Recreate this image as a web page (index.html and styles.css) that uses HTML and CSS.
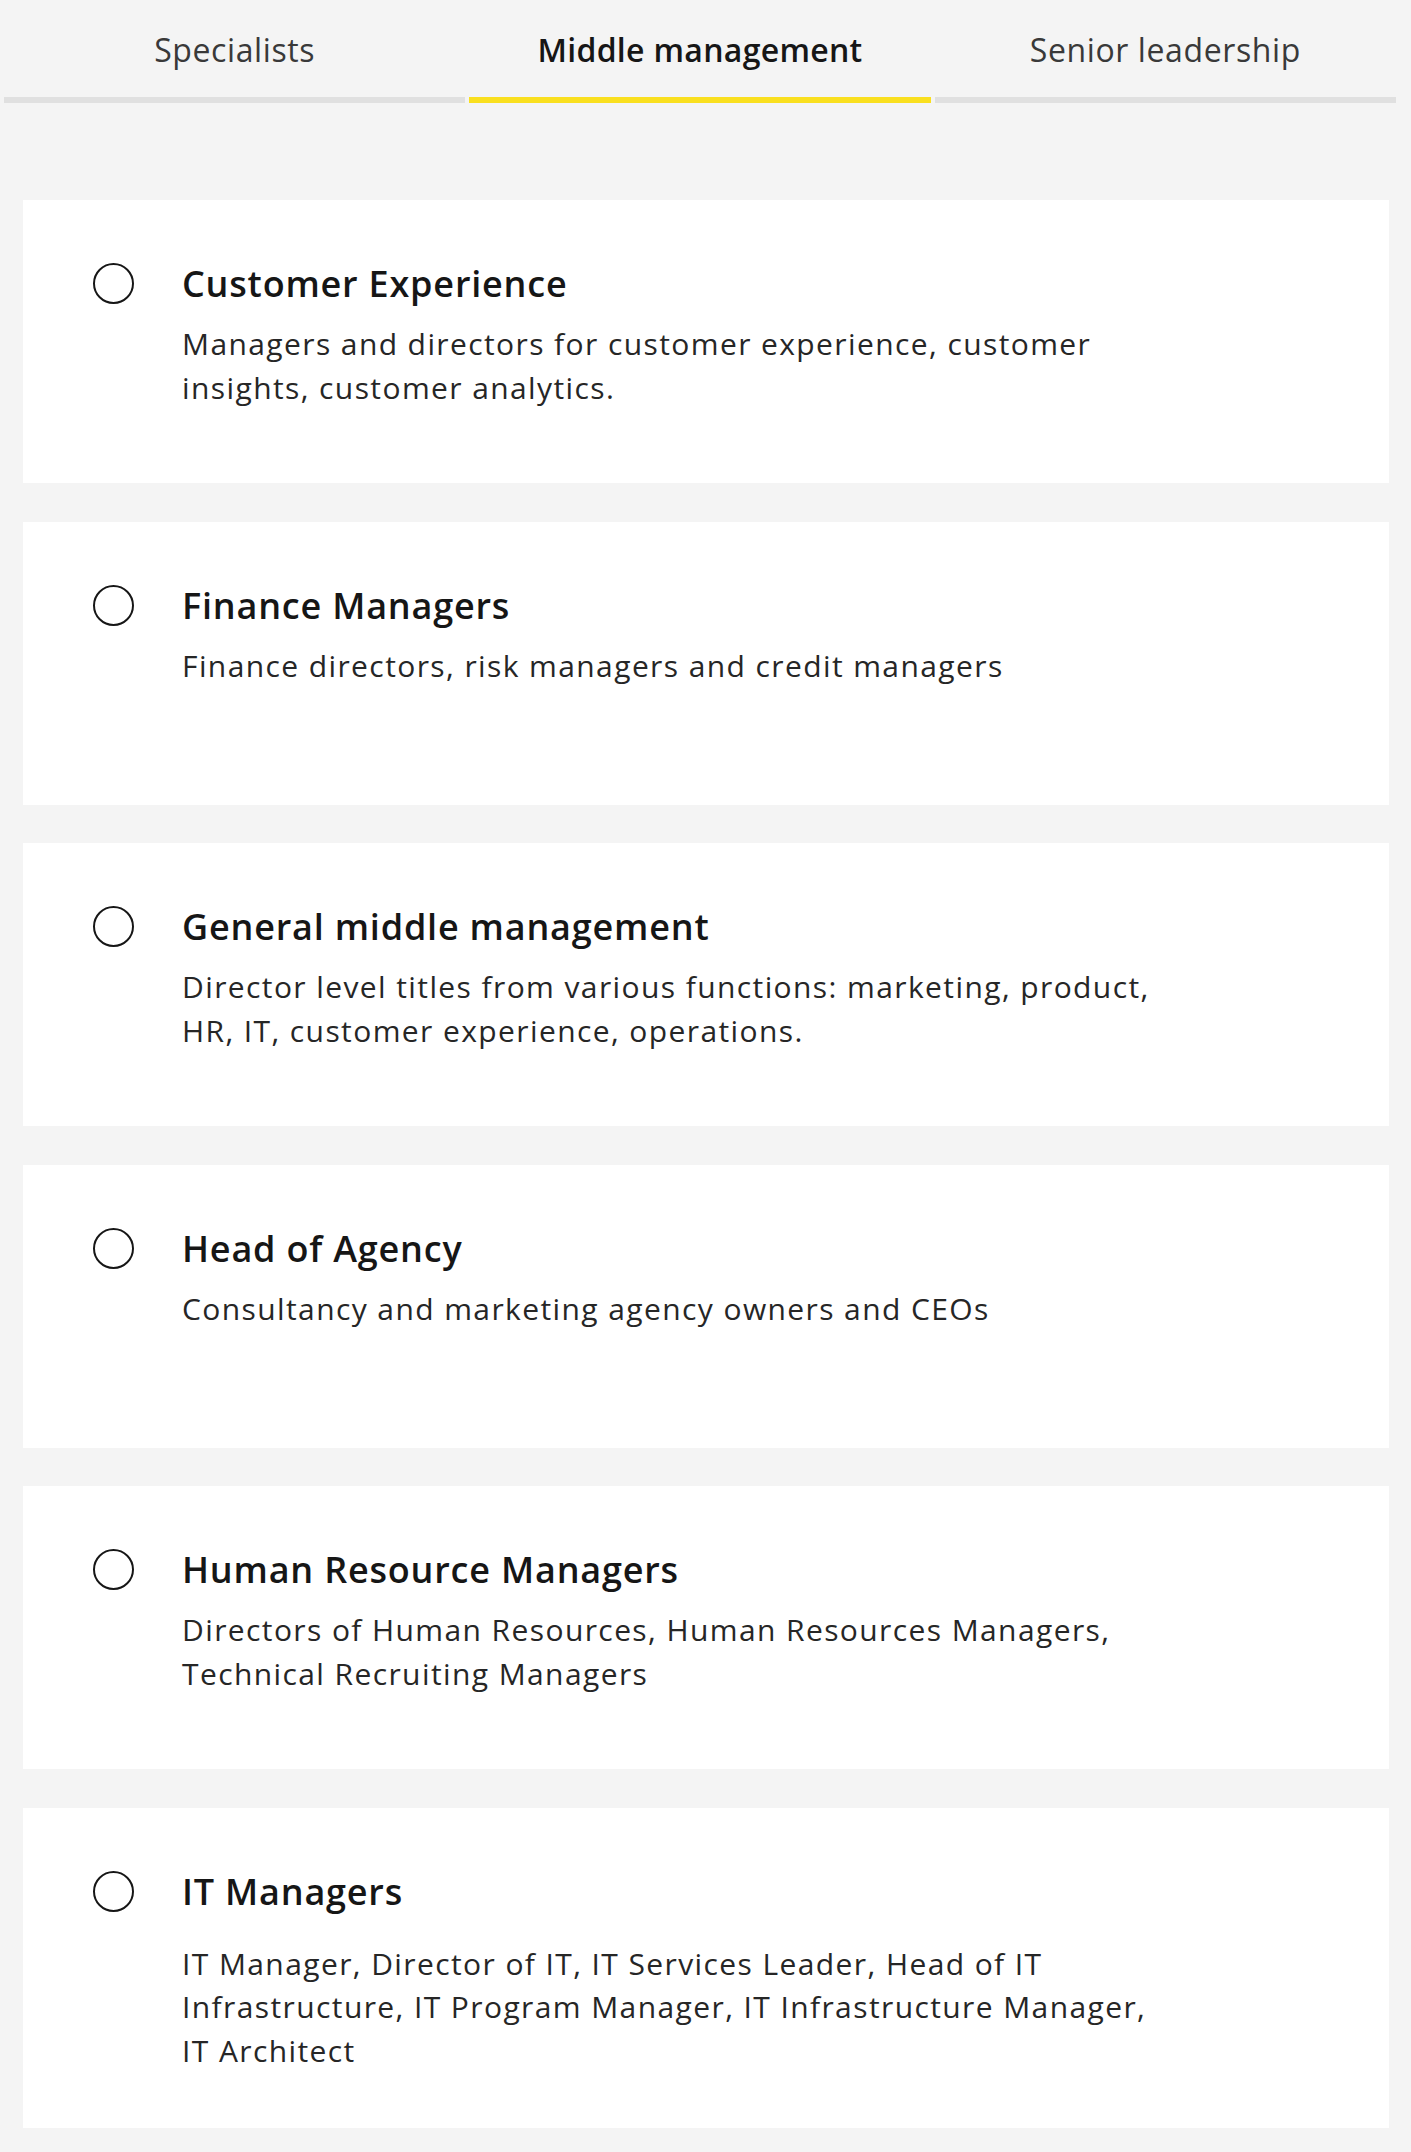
FILE: index.html
```html
<html>
    <head>
        <link rel="stylesheet" href="styles.css">
    </head>
    <body>
        <div class="tabs">
            <div class="tab">Specialists</div>
            <div class="tab active">Middle management</div>
            <div class="tab">Senior leadership</div>
        </div>

        <div class="list">
            <div class="card">
                <span class="radio"></span>
                <div class="body">
                    <div class="title">Customer Experience</div>
                    <div class="desc">Managers and directors for customer experience, customer insights, customer analytics.</div>
                </div>
            </div>
            <div class="card">
                <span class="radio"></span>
                <div class="body">
                    <div class="title">Finance Managers</div>
                    <div class="desc">Finance directors, risk managers and credit managers</div>
                </div>
            </div>
            <div class="card">
                <span class="radio"></span>
                <div class="body">
                    <div class="title">General middle management</div>
                    <div class="desc">Director level titles from various functions: marketing, product, HR, IT, customer experience, operations.</div>
                </div>
            </div>
            <div class="card">
                <span class="radio"></span>
                <div class="body">
                    <div class="title">Head of Agency</div>
                    <div class="desc">Consultancy and marketing agency owners and CEOs</div>
                </div>
            </div>
            <div class="card">
                <span class="radio"></span>
                <div class="body">
                    <div class="title">Human Resource Managers</div>
                    <div class="desc">Directors of Human Resources, Human Resources Managers, Technical Recruiting Managers</div>
                </div>
            </div>
            <div class="card">
                <span class="radio"></span>
                <div class="body">
                    <div class="title">IT Managers</div>
                    <div class="desc spaced">IT Manager, Director of IT, IT Services Leader, Head of IT Infrastructure, IT Program Manager, IT Infrastructure Manager, IT Architect</div>
                </div>
            </div>
        </div>
    </body>
</html>
```

FILE: styles.css
```css
body {
    margin: 0;
    background: #f4f4f4;
    font-family: "Open Sans", "Noto Sans", sans-serif;
    color: #161616;
}

.tabs {
    display: flex;
    gap: 4px;
    width: 1392px;
    margin-left: 4px;
}

.tab {
    flex: 1;
    text-align: center;
    font-size: 32px;
    line-height: 40px;
    letter-spacing: 0.6px;
    padding-top: 30px;
    padding-bottom: 27px;
    color: #393939;
    border-bottom: 6px solid #e0e0e0;
}

.tab.active {
    color: #161616;
    font-weight: 600;
    letter-spacing: 0.3px;
    border-bottom-color: #f9df1f;
}

.list {
    display: flex;
    flex-direction: column;
    gap: 38.5px;
    margin: 97px 22px 20px 23px;
}

.card {
    display: flex;
    align-items: flex-start;
    background: #ffffff;
    min-height: 283px;
    box-sizing: border-box;
    padding: 63px 40px 56px 70px;
}

.radio {
    flex: none;
    width: 41px;
    height: 41px;
    box-sizing: border-box;
    border: 2.5px solid #161616;
    border-radius: 50%;
    margin-right: 48px;
}

.body {
    max-width: 1000px;
}

.title {
    font-size: 36px;
    font-weight: 600;
    line-height: 41px;
    letter-spacing: 0.8px;
}

.desc {
    margin-top: 18px;
    font-size: 30px;
    line-height: 43.5px;
    letter-spacing: 1.4px;
    color: #262626;
}

.desc.spaced {
    margin-top: 30px;
}
```
